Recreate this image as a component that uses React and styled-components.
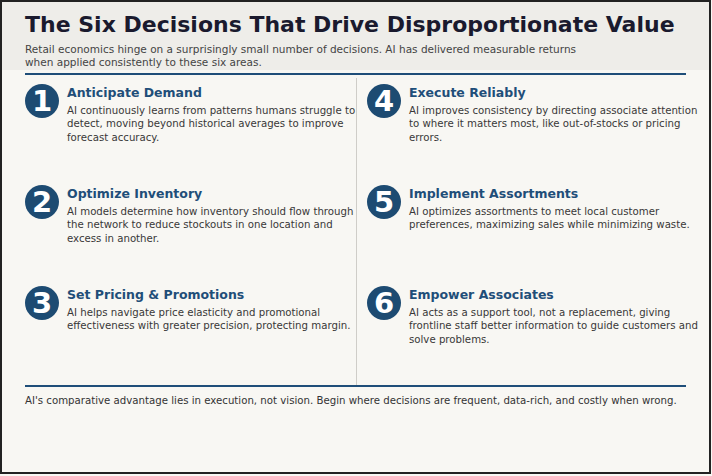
import React from 'react';
import styled, { createGlobalStyle } from 'styled-components';

const GlobalStyle = createGlobalStyle`
  html, body {
    margin: 0;
    padding: 0;
    background: #f8f7f3;
  }
  * {
    box-sizing: border-box;
  }
`;

const Frame = styled.div`
  width: 711px;
  height: 474px;
  border: 2px solid #222;
  background: #f8f7f3;
  font-family: "DejaVu Sans", Verdana, sans-serif;
  overflow: hidden;
`;

const Header = styled.header`
  background: #eeede9;
  padding: 10px 23px 1px;
`;

const Title = styled.h1`
  margin: 0;
  font-size: 22px;
  line-height: 26px;
  font-weight: 700;
  color: #1a1a2e;
`;

const Subtitle = styled.p`
  margin: 5px 0 0;
  max-width: 560px;
  font-size: 10.5px;
  line-height: 13px;
  color: #444;
`;

const Body = styled.main`
  padding: 0 23px;
`;

const Rule = styled.div`
  height: 2px;
  background: #1f4e79;
  margin-top: ${(p) => p.$top || 0}px;
`;

const Grid = styled.div`
  display: grid;
  grid-template-columns: 332px 342px;
  margin-top: 3px;
`;

const Column = styled.div`
  height: 307px;
  display: grid;
  grid-auto-rows: 101px;
  padding-top: 6px;
  padding-left: ${(p) => (p.$right ? 10 : 0)}px;
  border-right: ${(p) => (p.$right ? 'none' : '1px solid #cfcdc8')};
`;

const Item = styled.div`
  display: flex;
  align-items: flex-start;
  gap: 8px;
`;

const Badge = styled.div`
  flex: 0 0 34px;
  width: 34px;
  height: 34px;
  border-radius: 50%;
  background: #1d4b72;
  color: #fff;
  display: flex;
  align-items: center;
  justify-content: center;
  font-size: 29px;
  font-weight: 700;
  line-height: 1;
`;

const Text = styled.div`
  width: 292px;
`;

const Heading = styled.h2`
  margin: 1px 0 0;
  font-size: 12.5px;
  line-height: 16px;
  font-weight: 700;
  color: #1f4e79;
`;

const Desc = styled.p`
  margin: 3px 0 0;
  font-size: 10.2px;
  line-height: 13.3px;
  color: #383838;
`;

const Footer = styled.p`
  margin: 7px 0 0;
  font-size: 10.2px;
  line-height: 13px;
  color: #333;
  white-space: nowrap;
`;

const left = [
  {
    n: 1,
    title: 'Anticipate Demand',
    text: 'AI continuously learns from patterns humans struggle to detect, moving beyond historical averages to improve forecast accuracy.',
  },
  {
    n: 2,
    title: 'Optimize Inventory',
    text: 'AI models determine how inventory should flow through the network to reduce stockouts in one location and excess in another.',
  },
  {
    n: 3,
    title: 'Set Pricing & Promotions',
    text: 'AI helps navigate price elasticity and promotional effectiveness with greater precision, protecting margin.',
  },
];

const right = [
  {
    n: 4,
    title: 'Execute Reliably',
    text: 'AI improves consistency by directing associate attention to where it matters most, like out-of-stocks or pricing errors.',
  },
  {
    n: 5,
    title: 'Implement Assortments',
    text: 'AI optimizes assortments to meet local customer preferences, maximizing sales while minimizing waste.',
  },
  {
    n: 6,
    title: 'Empower Associates',
    text: 'AI acts as a support tool, not a replacement, giving frontline staff better information to guide customers and solve problems.',
  },
];

const Decision = ({ item }) => (
  <Item>
    <Badge>{item.n}</Badge>
    <Text>
      <Heading>{item.title}</Heading>
      <Desc>{item.text}</Desc>
    </Text>
  </Item>
);

const App = () => (
  <>
    <GlobalStyle />
    <Frame>
      <Header>
        <Title>The Six Decisions That Drive Disproportionate Value</Title>
        <Subtitle>
          Retail economics hinge on a surprisingly small number of decisions. AI has delivered measurable returns
          when applied consistently to these six areas.
        </Subtitle>
      </Header>
      <Body>
        <Rule $top={3} />
        <Grid>
          <Column>
            {left.map((item) => (
              <Decision key={item.n} item={item} />
            ))}
          </Column>
          <Column $right>
            {right.map((item) => (
              <Decision key={item.n} item={item} />
            ))}
          </Column>
        </Grid>
        <Rule />
        <Footer>
          AI's comparative advantage lies in execution, not vision. Begin where decisions are frequent, data-rich, and
          costly when wrong.
        </Footer>
      </Body>
    </Frame>
  </>
);

export default App;
